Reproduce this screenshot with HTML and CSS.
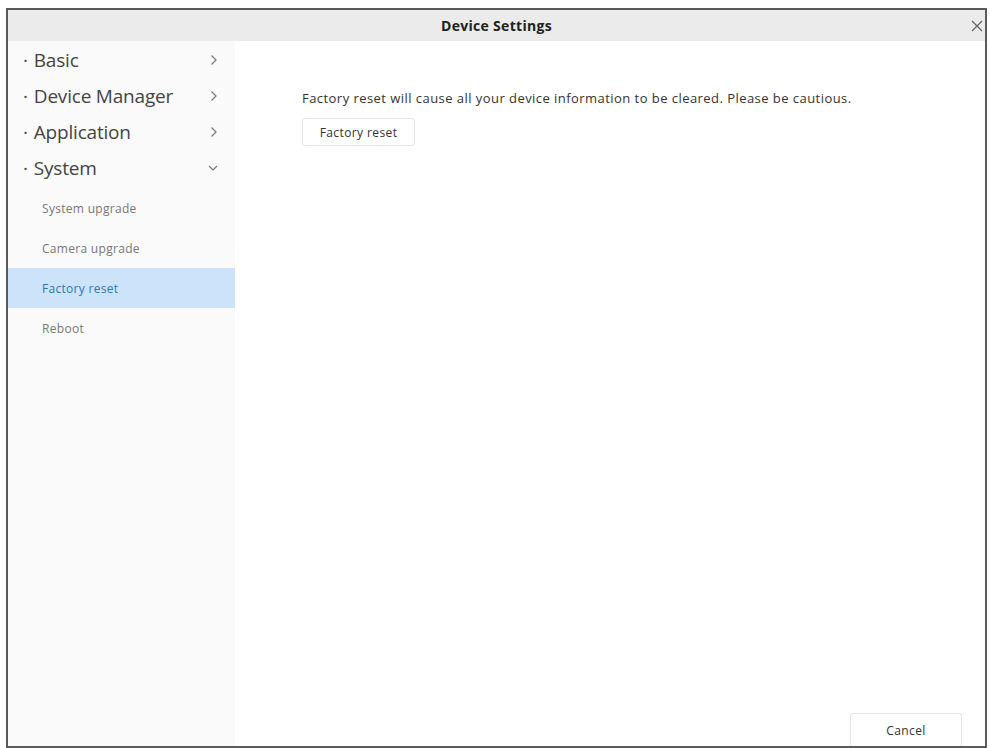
FILE: index.html
```html
<!DOCTYPE html>
<html lang="en">
<head>
  <meta charset="UTF-8" />
  <title>Device Settings</title>
  <link rel="stylesheet" href="styles.css">
</head>
<body>
  <div class="dialog">
    <div class="dialog-title">
      <span>Device Settings</span>
      <button class="close-btn" aria-label="Close">
        <svg width="12" height="12" viewBox="0 0 12 12"><path d="M1 1 L11 11 M11 1 L1 11" stroke="#666" stroke-width="1.3" fill="none"/></svg>
      </button>
    </div>
    <div class="dialog-body">
      <ul class="side-menu">
        <li class="menu-item"><span><i class="dot">·</i>Basic</span><svg class="chev" width="8" height="12" viewBox="0 0 8 12"><path d="M1.5 1.5 L6 6 L1.5 10.5" stroke="#777" stroke-width="1.2" fill="none"/></svg></li>
        <li class="menu-item"><span><i class="dot">·</i>Device Manager</span><svg class="chev" width="8" height="12" viewBox="0 0 8 12"><path d="M1.5 1.5 L6 6 L1.5 10.5" stroke="#777" stroke-width="1.2" fill="none"/></svg></li>
        <li class="menu-item"><span><i class="dot">·</i>Application</span><svg class="chev" width="8" height="12" viewBox="0 0 8 12"><path d="M1.5 1.5 L6 6 L1.5 10.5" stroke="#777" stroke-width="1.2" fill="none"/></svg></li>
        <li class="menu-item"><span><i class="dot">·</i>System</span><svg class="chev" width="10" height="8" viewBox="0 0 10 8"><path d="M1 2 L5 6 L9 2" stroke="#777" stroke-width="1.2" fill="none"/></svg></li>
        <li class="sub-item">System upgrade</li>
        <li class="sub-item">Camera upgrade</li>
        <li class="sub-item active">Factory reset</li>
        <li class="sub-item">Reboot</li>
      </ul>
      <div class="content">
        <div class="panel">
          <p class="notice">Factory reset will cause all your device information to be cleared. Please be cautious.</p>
          <button class="btn">Factory reset</button>
        </div>
        <div class="footer">
          <button class="btn cancel-btn">Cancel</button>
        </div>
      </div>
    </div>
  </div>
</body>
</html>
```
FILE: styles.css
```css
* {
  margin: 0;
  padding: 0;
  box-sizing: border-box;
}
body {
  font-family: 'Open Sans', 'Noto Sans', sans-serif;
  background: #fff;
  color: #333;
  padding: 8px 0 0 6px;
}
.dialog {
  width: 981px;
  height: 740px;
  border: 2px solid #5a5a5a;
  display: flex;
  flex-direction: column;
  background: #fff;
}
.dialog-title {
  position: relative;
  height: 31px;
  background: #ebebeb;
  display: flex;
  align-items: center;
  justify-content: center;
  font-size: 14px;
  font-weight: 700;
  color: #222;
  letter-spacing: 0.3px;
}
.close-btn {
  position: absolute;
  right: 2px;
  top: 10px;
  border: none;
  background: none;
  width: 12px;
  height: 12px;
  display: flex;
}
.dialog-body {
  flex: 1;
  display: flex;
}
/* Left navigation */
.side-menu {
  list-style: none;
  width: 227px;
  background: #fafafa;
  padding-top: 1px;
}
.menu-item {
  height: 36px;
  display: flex;
  align-items: center;
  justify-content: space-between;
  padding: 0 17px 0 15px;
  font-size: 19px;
  color: #444;
  letter-spacing: -0.2px;
}
.menu-item .dot {
  font-style: normal;
  margin-right: 6px;
}
.menu-item .chev {
  flex: none;
}
.sub-item {
  height: 40px;
  display: flex;
  align-items: center;
  padding-left: 34px;
  font-size: 12px;
  letter-spacing: 0.3px;
  color: #777;
}
.menu-item + .sub-item {
  margin-top: 2px;
}
.sub-item.active {
  background: #cde3f9;
  color: #2b78b5;
}
/* Right content */
.content {
  flex: 1;
  display: flex;
  flex-direction: column;
  padding-left: 67px;
}
.panel {
  flex: 1;
  padding-top: 48px;
}
.notice {
  font-size: 13px;
  color: #333;
  letter-spacing: 0.45px;
  margin-bottom: 11px;
}
.btn {
  font-family: inherit;
  font-size: 12px;
  letter-spacing: 0.4px;
  color: #333;
  background: #fff;
  border: 1px solid #e4e4e4;
  border-radius: 3px;
  padding: 0 10px;
  height: 28px;
  width: 113px;
}
.footer {
  display: flex;
  justify-content: flex-end;
  padding-right: 23px;
}
.cancel-btn {
  width: 112px;
  height: 33px;
  border-bottom: none;
  border-radius: 3px 3px 0 0;
}
```
